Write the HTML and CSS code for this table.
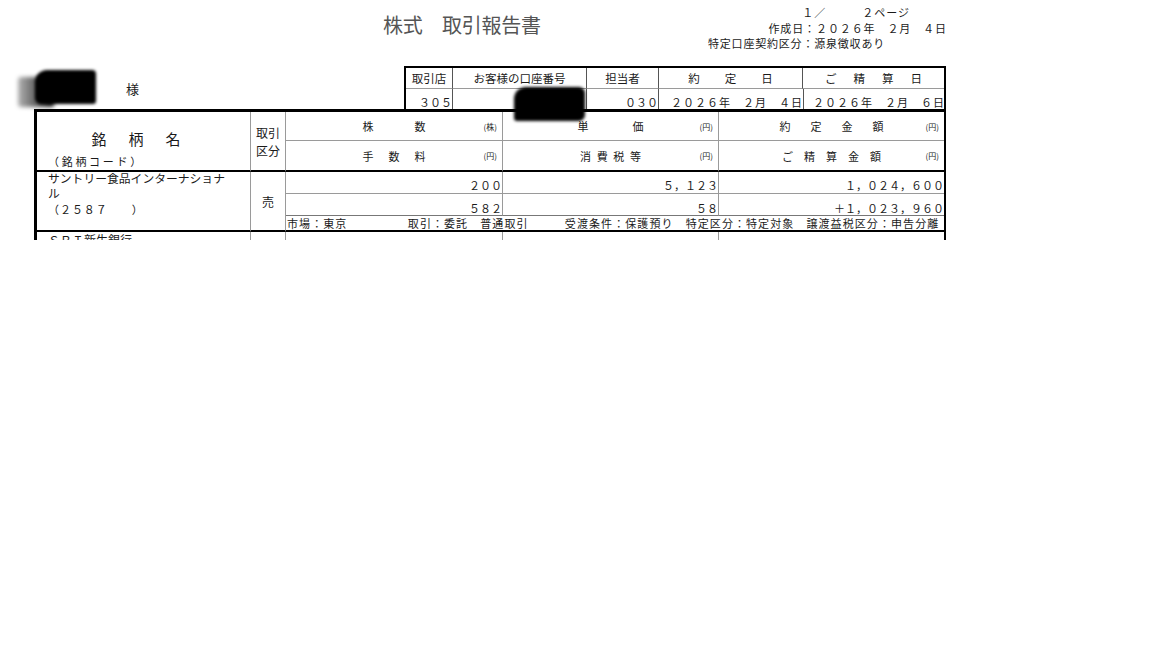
FILE: index.html
```html
<!DOCTYPE html>
<html lang="ja">
<head>
<meta charset="utf-8">
<title>株式 取引報告書</title>
<link rel="stylesheet" href="styles.css">
</head>
<body>
<div class="sheet">
  <div class="top">
    <h1 class="title">株式　取引報告書</h1>
    <div class="info">
      <div class="info-page">１／　　　２ページ</div>
      <div class="info-date">作成日：２０２６年　２月　４日</div>
      <div class="info-acct">特定口座契約区分：源泉徴収あり</div>
    </div>
  </div>

  <div class="namebar">
    <div class="customer">
      <span class="sama">様</span>
    </div>
    <div class="htable">
      <div class="hc lbl">取引店</div>
      <div class="hc lbl">お客様の口座番号</div>
      <div class="hc lbl">担当者</div>
      <div class="hc lbl sp-yaku">約定日</div>
      <div class="hc lbl sp-sei last">ご精算日</div>
      <div class="hc val">３０５</div>
      <div class="hc val"></div>
      <div class="hc val">０３０</div>
      <div class="hc val date">２０２６年　２月　４日</div>
      <div class="hc val date last">２０２６年　２月　６日</div>
    </div>
  </div>

  <div class="grid">
    <div class="c h-name">
      <span class="meigara">銘柄名</span>
      <span class="code-lbl">（銘柄コード）</span>
    </div>
    <div class="c h-kubun"><span>取引</span><span>区分</span></div>

    <div class="c h1 head"><span></span><span class="lab ls-kabu">株数</span><span class="unit">(株)</span></div>
    <div class="c h1 head"><span></span><span class="lab ls-tanka">単価</span><span class="unit">(円)</span></div>
    <div class="c h1 head last"><span></span><span class="lab ls-yakujo">約定金額</span><span class="unit">(円)</span></div>

    <div class="c h2 head"><span></span><span class="lab ls-tesu">手数料</span><span class="unit">(円)</span></div>
    <div class="c h2 head"><span></span><span class="lab ls-zei">消費税等</span><span class="unit">(円)</span></div>
    <div class="c h2 head last"><span></span><span class="lab ls-seisan">ご精算金額</span><span class="unit">(円)</span></div>

    <div class="c d-name">
      <div class="name-text">サントリー食品インターナショナ<br>ル<br><span class="code">（２５８７　　）</span></div>
    </div>
    <div class="c d-kubun">売</div>

    <div class="c num r3">２００</div>
    <div class="c num r3">５，１２３</div>
    <div class="c num r3 last">１，０２４，６００</div>

    <div class="c num r4">５８２</div>
    <div class="c num r4">５８</div>
    <div class="c num r4 last">＋１，０２３，９６０</div>

    <div class="c market">市場：東京　　　　　取引：委託　普通取引　　　受渡条件：保護預り　特定区分：特定対象　譲渡益税区分：申告分離</div>

    <div class="c n-name">ＳＢＩ新生銀行</div>
    <div class="c n-cell"></div>
    <div class="c n-cell"></div>
    <div class="c n-cell"></div>
    <div class="c n-cell last"></div>
  </div>

  <div class="redact ra-main"></div>
  <div class="redact ra-fade"></div>
  <div class="redact rb-main"></div>
</div>
</body>
</html>
```

FILE: styles.css
```css
* { box-sizing: border-box; }

html, body {
  margin: 0;
  padding: 0;
  background: #fff;
}

body {
  font-family: "Noto Sans CJK JP", "Noto Sans", sans-serif;
  color: #1a1a1a;
  font-size: 11px;
}

.sheet {
  position: relative;
  width: 1152px;
  height: 240px;
  overflow: hidden;
}

/* ---------- top ---------- */
.top {
  display: flex;
  width: 946px;
  height: 66px;
}

.title {
  margin: 15px 0 0 383px;
  font-size: 20px;
  line-height: 20px;
  font-weight: normal;
  letter-spacing: -0.3px;
  color: #555;
}

.info {
  margin-left: auto;
  padding-top: 5px;
  display: flex;
  flex-direction: column;
  align-items: flex-end;
  line-height: 15.5px;
  font-size: 11px;
}

.info-page { margin-right: 36px; letter-spacing: 1px; }
.info-date { letter-spacing: 0.9px; margin-right: -0.9px; }
.info-acct { margin-right: 61px; letter-spacing: 0.8px; }

/* ---------- name + header table ---------- */
.namebar {
  display: flex;
  height: 43px;
}

.customer {
  width: 404px;
  display: flex;
  align-items: center;
}

.sama {
  margin-left: 126px;
  margin-top: 1px;
  font-size: 13px;
}

.htable {
  display: grid;
  grid-template-columns: 47px 134px 72px 144px 141px;
  grid-template-rows: 21px 20px;
  width: 542px;
  border: 2px solid #000;
  border-bottom: none;
}

.hc {
  border-right: 1px solid #555;
  font-size: 11px;
  line-height: 14px;
  white-space: nowrap;
}
.hc.last { border-right: none; }

.hc.lbl {
  border-bottom: 1px solid #9a9a9a;
  display: flex;
  align-items: center;
  justify-content: center;
  font-size: 11.5px;
}

.sp-yaku { letter-spacing: 25px; padding-left: 25px; }
.sp-sei { letter-spacing: 17px; padding-left: 17px; }

.hc.val {
  display: flex;
  align-items: flex-end;
  justify-content: flex-end;
  padding-bottom: 0;
}

.hc.date { letter-spacing: 1px; margin-right: -1px; }

/* ---------- main grid ---------- */
.grid {
  display: grid;
  grid-template-columns: 214px 35px 217px 216px 225px;
  grid-template-rows: 29px 31px 22px 22px 16px 40px;
  width: 912px;
  margin-left: 34px;
  border-top: 3px solid #000;
  border-left: 3px solid #000;
  border-right: 2px solid #000;
}

.c {
  border-right: 1px solid #9a9a9a;
  white-space: nowrap;
}
.c.last { border-right: none; }

.h-name {
  grid-row: 1 / 3;
  grid-column: 1;
  border-bottom: 2px solid #000;
  display: flex;
  flex-direction: column;
  padding-top: 18px;
}

.meigara {
  font-size: 15px;
  line-height: 18px;
  letter-spacing: 22px;
  text-align: center;
  padding-left: 7px;
}

.code-lbl {
  margin-top: 6px;
  padding-left: 11px;
  font-size: 11px;
  line-height: 14px;
  letter-spacing: 2.7px;
}

.h-kubun {
  grid-row: 1 / 3;
  grid-column: 2;
  border-bottom: 2px solid #000;
  display: flex;
  flex-direction: column;
  align-items: center;
  padding-top: 12px;
  font-size: 12px;
  line-height: 18px;
}

.head {
  display: grid;
  grid-template-columns: 1fr auto 1fr;
  align-items: center;
  font-size: 11px;
}

.h1 { border-bottom: 1px solid #9a9a9a; }
.h2 { border-bottom: 2px solid #000; }

.unit {
  justify-self: end;
  font-size: 8px;
  padding-right: 5px;
  color: #222;
}

.lab { line-height: 14px; }
.ls-kabu { letter-spacing: 41px; padding-left: 41px; }
.ls-tanka { letter-spacing: 44px; padding-left: 44px; }
.ls-yakujo { letter-spacing: 20px; padding-left: 20px; }
.ls-tesu { letter-spacing: 15px; padding-left: 15px; }
.ls-zei { letter-spacing: 5.7px; padding-left: 5.7px; }
.ls-seisan { letter-spacing: 11px; padding-left: 11px; }

.d-name {
  grid-row: 3 / 6;
  grid-column: 1;
  border-bottom: 2px solid #000;
  padding-left: 11px;
}

.name-text {
  margin-top: -2px;
  font-size: 11.8px;
  line-height: 15.3px;
}

.code {
  font-size: 11px;
  letter-spacing: 0.95px;
}

.d-kubun {
  grid-row: 3 / 6;
  grid-column: 2;
  border-bottom: 2px solid #000;
  display: flex;
  align-items: center;
  justify-content: center;
  font-size: 12px;
}

.num {
  display: flex;
  align-items: flex-end;
  justify-content: flex-end;
  font-size: 11px;
  line-height: 14px;
  border-bottom: 1px solid #9a9a9a;
}
.num.r3 { padding-bottom: 1px; }
.num.r4 { border-bottom-color: #777; }

.market {
  grid-column: 3 / 6;
  border-right: none;
  border-bottom: 2px solid #000;
  font-size: 11px;
  line-height: 14px;
  letter-spacing: 1.08px;
  padding-left: 1px;
  overflow: hidden;
}

.n-name {
  font-size: 12px;
  line-height: 15px;
  padding-left: 11px;
  padding-top: 0;
}

/* ---------- redaction overlays ---------- */
.redact {
  position: absolute;
  background: #000;
}

.ra-main {
  left: 35px;
  top: 70px;
  width: 61px;
  height: 34px;
  border-radius: 12px 4px 3px 6px;
  filter: blur(1.5px);
}

.ra-fade {
  left: 18px;
  top: 77px;
  width: 36px;
  height: 30px;
  background: linear-gradient(90deg, rgba(0,0,0,0.3), rgba(0,0,0,0.95));
  border-radius: 3px;
  filter: blur(2px);
}

.rb-main {
  left: 514px;
  top: 87px;
  width: 71px;
  height: 34px;
  border-radius: 12px 6px 6px 3px;
  filter: blur(1.5px);
}
```
